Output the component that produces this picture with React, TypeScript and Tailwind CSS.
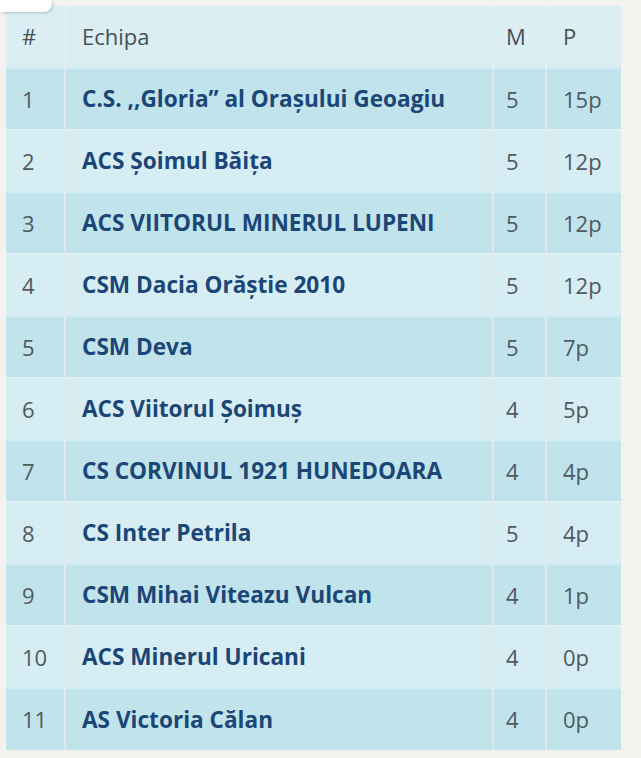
const teams = [
  { pos: 1, name: "C.S. ,,Gloria” al Orașului Geoagiu", m: 5, p: "15p" },
  { pos: 2, name: "ACS Șoimul Băița", m: 5, p: "12p" },
  { pos: 3, name: "ACS VIITORUL MINERUL LUPENI", m: 5, p: "12p" },
  { pos: 4, name: "CSM Dacia Orăștie 2010", m: 5, p: "12p" },
  { pos: 5, name: "CSM Deva", m: 5, p: "7p" },
  { pos: 6, name: "ACS Viitorul Șoimuș", m: 4, p: "5p" },
  { pos: 7, name: "CS CORVINUL 1921 HUNEDOARA", m: 4, p: "4p" },
  { pos: 8, name: "CS Inter Petrila", m: 5, p: "4p" },
  { pos: 9, name: "CSM Mihai Viteazu Vulcan", m: 4, p: "1p" },
  { pos: 10, name: "ACS Minerul Uricani", m: 4, p: "0p" },
  { pos: 11, name: "AS Victoria Călan", m: 4, p: "0p" },
];

const App = () => {
  return (
    <div className="relative min-h-[758px] w-[641px] bg-[#f3f2ee] pt-[6px] pl-[6px] font-['Open_Sans',sans-serif] text-[22px]">
      <div className="absolute left-0 top-0 h-[12px] w-[52px] rounded-br-[8px] bg-white shadow-[1px_1px_3px_rgba(0,0,0,0.2)]" />
      <table className="w-[615px] table-fixed border-collapse">
        <colgroup>
          <col className="w-[59px]" />
          <col className="w-[428px]" />
          <col className="w-[53px]" />
          <col className="w-[75px]" />
        </colgroup>
        <thead>
          <tr className="h-[62px] bg-[#daeef4] text-[#475055]">
            <th className="border-r-2 border-[#e6eeee] pl-[16px] text-left font-normal">#</th>
            <th className="border-r-2 border-[#e6eeee] pl-[16px] text-left font-normal">Echipa</th>
            <th className="border-r-2 border-[#e6eeee] pl-[12px] text-left font-normal">M</th>
            <th className="pl-[16px] text-left font-normal">P</th>
          </tr>
        </thead>
        <tbody>
          {teams.map((t, i) => (
            <tr
              key={t.pos}
              className={
                i % 2 === 0
                  ? "h-[62px] border-t-2 border-[#d3ebf1] bg-[#c0e3ec] text-[#4e5a60]"
                  : "h-[62px] border-t-2 border-[#e0f1f5] bg-[#d6edf3] text-[#4e5a60]"
              }
            >
              <td className="border-r-2 border-[#dfe9ea] pl-[16px]">{t.pos}</td>
              <td className="border-r-2 border-[#dfe9ea] pl-[16px] text-[22.6px] font-bold text-[#1b4676] whitespace-nowrap">
                {t.name}
              </td>
              <td className="border-r-2 border-[#dfe9ea] pl-[12px]">{t.m}</td>
              <td className="pl-[16px]">{t.p}</td>
            </tr>
          ))}
        </tbody>
      </table>
    </div>
  );
};

export default App;
